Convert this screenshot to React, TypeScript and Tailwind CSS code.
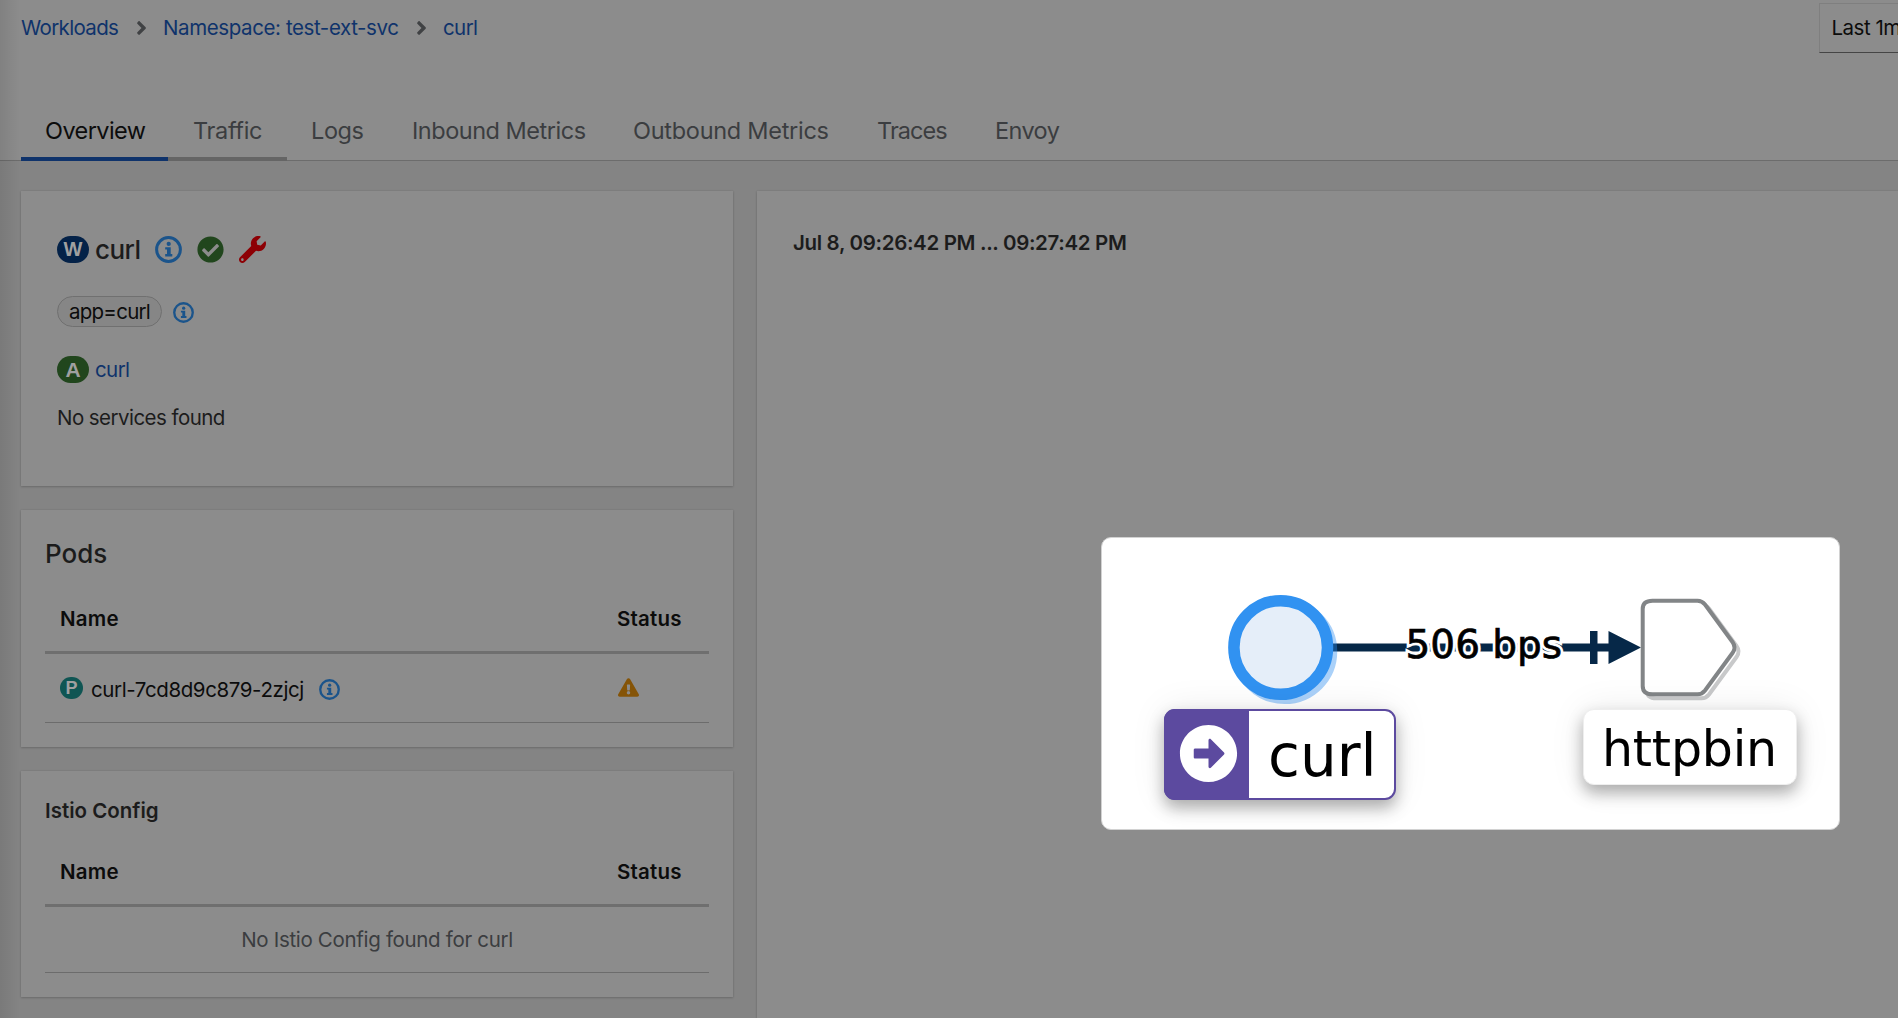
import type { ReactNode } from "react";
import {
  FaAngleRight,
  FaArrowAltCircleRight,
  FaCheckCircle,
  FaExclamationTriangle,
  FaWrench,
} from "react-icons/fa";

function InfoIcon({ className }: { className: string }) {
  return (
    <svg viewBox="0 0 27 27" className={className} fill="none">
      <circle cx="13.5" cy="13.5" r="11.9" stroke="#1b548b" strokeWidth="3" />
      <circle cx="13.7" cy="7.9" r="2.1" fill="#1b548b" />
      <path d="M10.200 11.200h5.500v6.900h1.600v2.400h-7.100v-2.400h1.800v-4.500h-1.800z" fill="#1b548b" />
    </svg>
  );
}

function Badge({ letter, className }: { letter: string; className: string }) {
  return (
    <span
      className={`flex shrink-0 items-center justify-center rounded-[13.500px] font-['Liberation_Sans',sans-serif] font-bold leading-none text-[#a0a0a0] ${className}`}
    >
      {letter}
    </span>
  );
}

function Card({ className, children }: { className: string; children?: ReactNode }) {
  return (
    <section
      className={`bg-[#8c8c8c] shadow-[0_1px_2px_rgba(0,0,0,0.16),0_0_2px_rgba(0,0,0,0.1)] ${className}`}
    >
      {children}
    </section>
  );
}

const tabs = [
  { name: "Overview", style: "w-[147px] border-[#0f336b] text-[#0c0c0c] tracking-[-0.57px] pl-6" },
  { name: "Traffic", style: "w-[119px] border-[#656565] text-[#3b3d40] tracking-[-0.33px] pl-[25px]" },
  { name: "Logs", style: "w-[101px] border-transparent text-[#3b3d40] tracking-[-0.4px] pl-6" },
  { name: "Inbound Metrics", style: "w-[221px] border-transparent text-[#3b3d40] tracking-[-0.48px] pl-6" },
  { name: "Outbound Metrics", style: "w-[244px] border-transparent text-[#3b3d40] tracking-[-0.28px] pl-6" },
  { name: "Traces", style: "w-[118px] border-transparent text-[#3b3d40] tracking-[-0.95px] pl-6" },
  { name: "Envoy", style: "w-[113px] border-transparent text-[#3b3d40] tracking-[-0.6px] pl-6" },
];

function TableHead() {
  return (
    <div className="flex h-[82px] items-end border-b-[3px] border-[#6f6f6f] pb-[17px] pl-[15px] font-semibold text-[#0c0c0c] tracking-[0.2px]">
      <span className="w-[557px]">Name</span>
      <span>Status</span>
    </div>
  );
}

function TrafficGraph() {
  return (
    <div className="absolute left-[344px] top-[346px] h-[293px] w-[739px] overflow-hidden rounded-[10px] border border-[#d2d2d2] bg-white font-['DejaVu_Sans',sans-serif] text-black">
      <svg viewBox="1 1 737 291" className="absolute inset-0 h-[291px] w-[737px]" fill="none">
        <path d="M230 110.5H520" stroke="#062848" strokeWidth="8" />
        <circle cx="183.7" cy="114.5" r="46.8" stroke="#2b8df0" strokeOpacity="0.4" strokeWidth="11.5" />
        <circle cx="179.7" cy="110.5" r="46.8" fill="#e5eef9" stroke="#3192f1" strokeWidth="11.5" />
        <path d="M489 94h7.5v33H489zM507.500 94L540 110.500L507.500 127z" fill="#062848" />
        <g strokeWidth="4">
          <path
            transform="translate(4 4)"
            d="M551.500 63.700H596.500Q601 63.700 604 67.500L631.500 105Q635.500 110.500 631.500 116L604 153.500Q601 157.300 596.500 157.300H551.500Q541.700 157.300 541.700 149V72Q541.700 63.700 551.500 63.700Z"
            stroke="#c8c9ca"
          />
          <path
            d="M551.500 63.700H596.500Q601 63.700 604 67.500L631.500 105Q635.500 110.500 631.500 116L604 153.500Q601 157.300 596.500 157.300H551.500Q541.700 157.300 541.700 149V72Q541.700 63.700 551.500 63.700Z"
            fill="#fff"
            stroke="#828587"
          />
        </g>
        <g fontSize="39">
          <text x="304.500" y="120.500" stroke="#fff" strokeWidth="6">
            506 bps
          </text>
          <text x="304.500" y="120.500" fill="#000" stroke="#000" strokeWidth="0.7" aria-hidden="true">
            506 bps
          </text>
        </g>
      </svg>
      <div className="absolute left-[62px] top-[171px] flex h-[91px] w-[232px] rounded-[11px] border-2 border-[#5c4a9f] bg-white shadow-[0_8px_16px_rgba(0,0,0,0.3),0_0_36px_rgba(0,0,0,0.08)]">
        <div className="-my-0.5 -ml-0.5 flex w-[85px] shrink-0 items-center justify-center rounded-l-[11px] bg-[#5c4a9f] pb-[3px] pl-[4px]">
          <FaArrowAltCircleRight className="size-[59px] text-white" />
        </div>
        <span className="pl-[19px] pt-[3px] text-[58px] leading-[84px]">curl</span>
      </div>
      <div className="absolute left-[481px] top-[171px] h-[76px] w-[214px] rounded-[11px] border border-[#eeeeee] bg-white pl-[18px] text-[49px] leading-[80px] tracking-[-0.2px] shadow-[0_8px_16px_rgba(0,0,0,0.3),0_0_36px_rgba(0,0,0,0.08)]">
        httpbin
      </div>
    </div>
  );
}

export default function App() {
  return (
    <div className="relative flex h-[1018px] w-[1898px] flex-col overflow-hidden bg-[#848484] font-['Inter',sans-serif] text-[20.5px] leading-[30px] text-[#1c1c1c]">
      <header className="flex h-[161px] shrink-0 flex-col justify-between border-b border-[#6c6c6c] bg-[#8c8c8c] pl-[21px]">
        <div className="flex items-start justify-between pt-[3px]">
          <nav className="flex items-center pt-[10px] text-[#0f336b]">
            <span className="w-[115px] tracking-[-0.65px]">Workloads</span>
            <FaAngleRight className="-ml-[3px] mr-[13px] h-[22px] w-[17px] text-[#404244]" />
            <span className="w-[252px] tracking-[-0.4px]">Namespace: test-ext-svc</span>
            <FaAngleRight className="-ml-[2px] mr-[13px] h-[22px] w-[17px] text-[#404244]" />
            <span className="tracking-[-0.6px]">curl</span>
          </nav>
          <div className="h-[50px] w-[79px] overflow-hidden whitespace-nowrap border border-r-0 border-[#7f7f7f] border-b-[#454545] pl-[11.500px] pt-[9px] tracking-[-0.5px] text-[#0c0c0c]">
            Last 1m
          </div>
        </div>
        <ul className="-mb-px flex h-[49px] text-[23.5px] leading-[38px]">
          {tabs.map((t) => (
            <li key={t.name} className={`whitespace-nowrap border-b-4 ${t.style}`}>
              {t.name}
            </li>
          ))}
        </ul>
      </header>

      <main className="flex flex-1 gap-6 pl-[21px] pt-[30px]">
        <div className="flex w-[712px] shrink-0 flex-col gap-6">
          <Card className="h-[295px] pl-9 pt-10">
            <div className="flex h-9 items-center text-[26px] font-medium leading-9">
              <Badge letter="W" className="h-[27px] w-8 bg-[#042248] text-[20px]" />
              <span className="ml-[6px] w-[60px] pt-px tracking-[-0.57px]">curl</span>
              <InfoIcon className="mt-px size-[27px]" />
              <FaCheckCircle className="ml-[15px] mt-px size-[27px] text-[#21461d]" />
              <FaWrench className="ml-[15px] size-[27px] text-[#8d0005]" />
            </div>
            <div className="mt-[29px] flex h-[31px] items-center">
              <span className="h-[31px] w-[105px] rounded-full border border-[#707070] bg-[#868686] pl-[11px] leading-[29px] tracking-[-0.75px] text-[#0c0c0c]">
                app=curl
              </span>
              <InfoIcon className="ml-[11px] mt-0.5 size-[21px]" />
            </div>
            <div className="mt-[29px] flex h-[27px] items-center">
              <Badge letter="A" className="h-[27px] w-8 bg-[#21461d] text-[21px]" />
              <span className="ml-[6px] tracking-[-0.6px] text-[#0f336b]">curl</span>
            </div>
            <p className="mt-5 tracking-[-0.55px]">No services found</p>
          </Card>

          <Card className="h-[237px] px-6 pt-[26px]">
            <h2 className="text-[26px] font-medium leading-9">Pods</h2>
            <TableHead />
            <div className="flex h-[69px] items-center border-b border-[#6c6c6c] pl-[15px] text-[#0c0c0c]">
              <Badge letter="P" className="h-[22px] w-[23px] bg-[#0f5553] text-[18px]" />
              <span className="ml-2 w-[220px] pt-[3px] tracking-[-0.4px]">curl-7cd8d9c879-2zjcj</span>
              <InfoIcon className="ml-[8px] mt-[3px] size-[21px]" />
              <FaExclamationTriangle className="ml-[278px] mb-px size-[21px] text-[#855407]" />
            </div>
          </Card>

          <Card className="h-[226px] px-6 pt-[25px]">
            <h3 className="-mb-px font-semibold">Istio Config</h3>
            <TableHead />
            <div className="flex h-[66px] items-center justify-center border-b border-[#6c6c6c] tracking-[-0.32px] text-[#3b3d40]">
              No Istio Config found for curl
            </div>
          </Card>
        </div>

        <Card className="relative flex-1 pl-9 pt-[37px]">
          <p className="font-semibold tracking-[-0.34px]">Jul 8, 09:26:42 PM ... 09:27:42 PM</p>
          <TrafficGraph />
        </Card>
      </main>

      <div className="pointer-events-none absolute inset-y-0 left-0 w-5 bg-linear-to-r from-black/8 to-transparent" />
    </div>
  );
}
